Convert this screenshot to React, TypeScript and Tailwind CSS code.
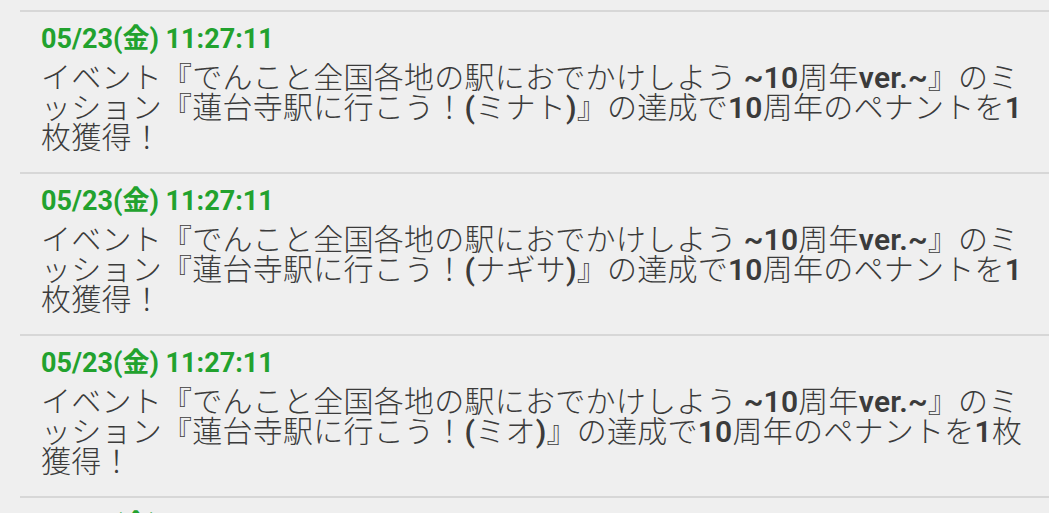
const jp = "font-['Noto_Sans_CJK_JP',sans-serif]";
const num = "font-['Roboto','Noto_Sans_CJK_JP',sans-serif] font-semibold leading-none";

type Entry = { time: string; name: string; split: "a" | "b" };

const entries: Entry[] = [
  { time: "05/23(金) 11:27:11", name: "ミナト", split: "a" },
  { time: "05/23(金) 11:27:11", name: "ナギサ", split: "a" },
  { time: "05/23(金) 11:27:11", name: "ミオ", split: "b" },
  { time: "05/23(金) 11:27:11", name: "ミオ", split: "b" },
];

const line = "h-[30px] whitespace-nowrap";

function Body({ e }: { e: Entry }) {
  return (
    <div className={`mt-[6px] text-[30px] leading-[30px] font-light tracking-[0.25px] text-[#3b3b3b] ${jp}`}>
      <div className={line}>
        イベント『でんこと全国各地の駅におでかけしよう{" "}
        <span className={num}>~10</span>周年<span className={num}>ver.~</span>』のミ
      </div>
      <div className={line}>
        ッション『蓮台寺駅に行こう！<span className={num}>(</span>
        {e.name}
        <span className={num}>)</span>』の達成で<span className={num}>10</span>周年のペナントを
        <span className={num}>1</span>
        {e.split === "b" ? "枚" : ""}
      </div>
      <div className={line}>{e.split === "b" ? "獲得！" : "枚獲得！"}</div>
    </div>
  );
}

export default function App() {
  return (
    <div className="h-[513px] w-[1049px] overflow-hidden bg-[#efefef] pt-[10px]">
      {entries.map((e, i) => (
        <div
          key={i}
          className="ml-[20px] border-t-2 border-[#d7d7d7] pb-[22px] pl-[21px] pr-[20px] pt-[12px]"
        >
          <div className="h-[30px] whitespace-nowrap text-[27px] leading-[30px] font-bold text-[#22a22e] font-['Roboto','Noto_Sans_CJK_JP',sans-serif]">
            {e.time}
          </div>
          <Body e={e} />
        </div>
      ))}
    </div>
  );
}
